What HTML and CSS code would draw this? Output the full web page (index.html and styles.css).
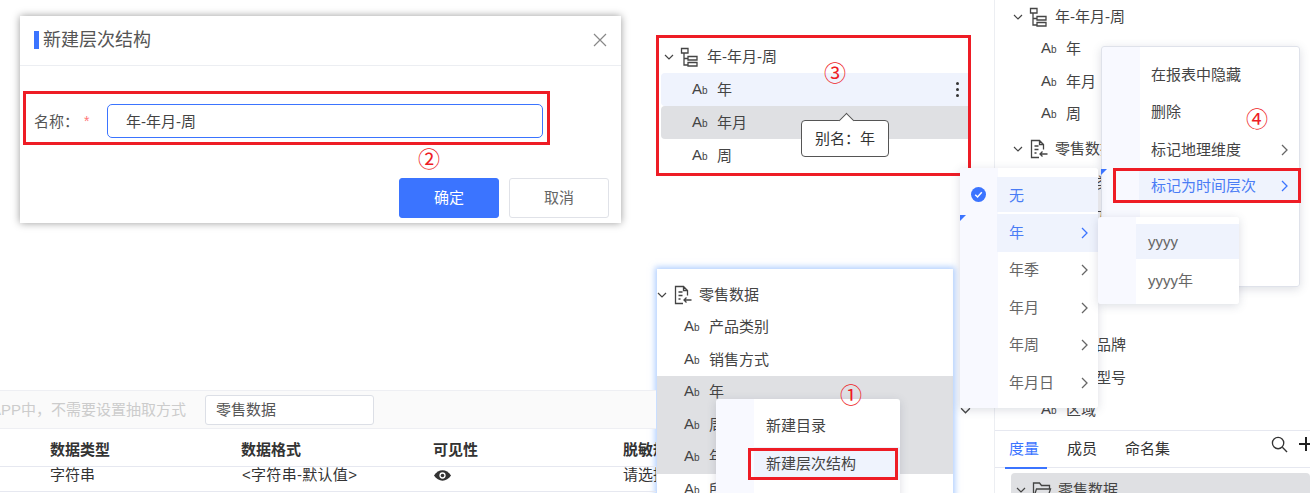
FILE: index.html
```html
<!DOCTYPE html>
<html lang="zh">
<head>
<meta charset="utf-8">
<title>新建层次结构</title>
<link rel="stylesheet" href="styles.css">
</head>
<body>
<svg class="defs" width="0" height="0" aria-hidden="true">
  <defs>
    <symbol id="hier" viewBox="0 0 20 20"><path d="M1.500 1.500h6.500v4.500h-6.500zM4 6v12h3.500M4 11.500h3.500M8 9.500h9v3.500h-9zM8 15.500h9v3.500h-9z" fill="none" stroke="currentColor" stroke-width="1.300"/></symbol>
    <symbol id="data" viewBox="0 0 20 20"><path d="M10 18.500H2.500V1.500h8l4 4v5M10.500 1.500v4h4M5.500 7h4M5.500 10.500h4M5.500 14h2M18.500 15h-7M13.500 12.500L11 15l2.500 2.500" fill="none" stroke="currentColor" stroke-width="1.300"/></symbol>
    <symbol id="down" viewBox="0 0 10 6"><path d="M1 1l4 4 4-4" fill="none" stroke="currentColor" stroke-width="1.200"/></symbol>
    <symbol id="right" viewBox="0 0 7 12"><path d="M1 1l5 5-5 5" fill="none" stroke="currentColor" stroke-width="1.300"/></symbol>
  </defs>
</svg>

<div class="dialog">
  <div class="dialog-head">
    <span class="mark"></span>
    <span class="dialog-title">新建层次结构</span>
    <svg class="close" viewBox="0 0 14 14"><path d="M1 1l12 12M13 1L1 13" fill="none" stroke="currentColor" stroke-width="1.200"/></svg>
  </div>
  <div class="form-row">
    <span class="label">名称：</span><span class="req">*</span>
    <div class="input">年-年月-周</div>
  </div>
  <div class="dialog-foot">
    <div class="btn primary">确定</div>
    <div class="btn">取消</div>
  </div>
</div>
<div class="redbox box2"></div>
<span class="num num2">②</span>

<div class="tree tree3">
  <div class="head"><svg class="chev"><use href="#down"/></svg><svg class="ico"><use href="#hier"/></svg><span>年-年月-周</span></div>
  <div class="leaf light"><span class="ab">A<small>b</small></span><span>年</span><span class="dots"><i></i><i></i><i></i></span></div>
  <div class="leaf grey"><span class="ab">A<small>b</small></span><span>年月</span></div>
  <div class="leaf"><span class="ab">A<small>b</small></span><span>周</span></div>
</div>
<div class="redbox box3"></div>
<span class="num num3">③</span>
<div class="tooltip">别名：年</div>

<div class="tree tree1">
  <div class="head"><svg class="chev"><use href="#down"/></svg><svg class="ico"><use href="#data"/></svg><span>零售数据</span></div>
  <div class="leaf"><span class="ab">A<small>b</small></span><span>产品类别</span></div>
  <div class="leaf"><span class="ab">A<small>b</small></span><span>销售方式</span></div>
  <div class="leaf grey"><span class="ab">A<small>b</small></span><span>年</span></div>
  <div class="leaf grey"><span class="ab">A<small>b</small></span><span>周</span></div>
  <div class="leaf grey"><span class="ab">A<small>b</small></span><span>年月</span></div>
  <div class="leaf"><span class="ab">A<small>b</small></span><span>所属</span></div>
</div>
<div class="menu menu1">
  <div class="item">新建目录</div>
  <div class="item hover">新建层次结构</div>
</div>
<div class="redbox box1"></div>
<span class="num num1">①</span>

<div class="sheet">
  <div class="band">
    <span class="hint">APP中，不需要设置抽取方式</span>
    <div class="src">零售数据</div>
  </div>
  <div class="grid grid-head"><span>数据类型</span><span>数据格式</span><span>可见性</span><span>脱敏规则</span></div>
  <div class="grid grid-row"><span>字符串</span><span class="fmt">&lt;字符串-默认值&gt;</span><span><svg class="eye" viewBox="0 0 20 12"><path d="M1 6c2.500-3.500 5.500-5.500 9-5.500s6.500 2 9 5.500c-2.500 3.500-5.500 5.500-9 5.500S3.500 9.500 1 6z" fill="currentColor"/><circle cx="10" cy="6" r="3.300" fill="#fff"/><circle cx="10" cy="6" r="1.900" fill="currentColor"/></svg></span><span>请选择</span></div>
</div>
<svg class="loose-chev"><use href="#down"/></svg>

<aside class="side">
  <div class="tree-side">
    <div class="head"><svg class="chev"><use href="#down"/></svg><svg class="ico"><use href="#hier"/></svg><span>年-年月-周</span></div>
    <div class="leaf"><span class="ab">A<small>b</small></span><span>年</span></div>
    <div class="leaf"><span class="ab">A<small>b</small></span><span>年月</span></div>
    <div class="leaf"><span class="ab">A<small>b</small></span><span>周</span></div>
    <div class="head"><svg class="chev"><use href="#down"/></svg><svg class="ico"><use href="#data"/></svg><span>零售数据</span></div>
    <div class="leaf"><span class="ab">A<small>b</small></span><span>产品类别</span></div>
    <div class="leaf"><span class="ab">A<small>b</small></span><span>销售方式</span></div>
    <div class="leaf"><span class="ab">A<small>b</small></span><span>年</span></div>
    <div class="leaf"><span class="ab">A<small>b</small></span><span>周</span></div>
    <div class="leaf"><span class="ab">A<small>b</small></span><span>年月</span></div>
    <div class="leaf"><span class="ab">A<small>b</small></span><span>产品品牌</span></div>
    <div class="leaf"><span class="ab">A<small>b</small></span><span>产品型号</span></div>
    <div class="leaf"><span class="ab">A<small>b</small></span><span>区域</span></div>
  </div>
  <div class="tabs">
    <span class="tab active">度量</span><span class="tab">成员</span><span class="tab">命名集</span>
    <svg class="search" viewBox="0 0 18 18"><circle cx="7.500" cy="7.500" r="6" fill="none" stroke="currentColor" stroke-width="1.400"/><path d="M12 12l5 5" stroke="currentColor" stroke-width="1.400"/></svg>
    <svg class="plus" viewBox="0 0 14 14"><path d="M7 0v14M0 7h14" stroke="currentColor" stroke-width="2"/></svg>
  </div>
  <div class="folder"><svg class="chev"><use href="#down"/></svg><svg class="ico" viewBox="0 0 20 20"><path d="M1.500 18V3h6l2 2.500h8V9M1.500 18l3-9h14l-3 9z" fill="none" stroke="currentColor" stroke-width="1.300"/></svg><span>零售数据</span></div>
</aside>

<div class="menu menu4">
  <div class="item">在报表中隐藏</div>
  <div class="item">删除</div>
  <div class="item">标记地理维度<svg class="arr"><use href="#right"/></svg></div>
  <div class="item hover blue">标记为时间层次<svg class="arr"><use href="#right"/></svg></div>
</div>
<div class="redbox box4"></div>
<span class="num num4">④</span>

<div class="menu menu-time">
  <div class="item hover blue"><svg class="check" viewBox="0 0 16 16"><circle cx="8" cy="8" r="8" fill="#3b74ff"/><path d="M4.500 8.200l2.500 2.400 4.500-5" fill="none" stroke="#fff" stroke-width="1.600"/></svg>无</div>
  <div class="item hover blue">年<svg class="arr"><use href="#right"/></svg></div>
  <div class="item">年季<svg class="arr"><use href="#right"/></svg></div>
  <div class="item">年月<svg class="arr"><use href="#right"/></svg></div>
  <div class="item">年周<svg class="arr"><use href="#right"/></svg></div>
  <div class="item">年月日<svg class="arr"><use href="#right"/></svg></div>
  <i class="corner corner-a"></i>
</div>
<i class="corner corner-b"></i>

<div class="menu menu-fmt">
  <div class="item hover">yyyy</div>
  <div class="item">yyyy年</div>
</div>
</body>
</html>
```

FILE: styles.css
```css
* { box-sizing: border-box; }
html, body { margin: 0; height: 100%; }
body {
  position: relative;
  width: 1310px;
  height: 493px;
  overflow: hidden;
  background: #fff;
  color: #333;
  font: 15px/20px "Liberation Sans", "Noto Sans CJK SC", sans-serif;
}
.defs { position: absolute; }

/* dialog */
.dialog {
  position: absolute;
  left: 20px;
  top: 16px;
  width: 601px;
  height: 207px;
  display: flex;
  flex-direction: column;
  background: #fff;
  box-shadow: 0 0 8px rgba(0, 0, 0, .4);
}
.dialog-head {
  flex: 0 0 50px;
  display: flex;
  align-items: center;
  gap: 4px;
  padding: 0 14px 1px;
  border-bottom: 1px solid #eceef2;
}
.mark { width: 5px; height: 18px; background: #3b74ff; }
.dialog-title { flex: 1; font-size: 18px; color: #555; margin-bottom: 1px; }
.close { width: 14px; height: 14px; color: #888; }
.form-row {
  display: flex;
  align-items: center;
  margin: 38px 78px 0 14px;
  height: 34px;
}
.label { color: #555; padding-top: 2px; }
.req { color: #f77; margin-left: 5px; width: 23px; font-size: 14px; }
.input {
  flex: 1;
  height: 34px;
  padding: 0 18px;
  line-height: 34px;
  border: 1px solid #3b74ff;
  border-radius: 5px;
  color: #444;
}
.dialog-foot {
  display: flex;
  justify-content: flex-end;
  gap: 10px;
  margin: 40px 12px 0 0;
}
.btn {
  width: 100px;
  height: 40px;
  line-height: 38px;
  text-align: center;
  border: 1px solid #e0e2e8;
  border-radius: 3px;
  color: #666;
}
.primary { background: #3b74ff; border-color: #3b74ff; color: #fff; }

/* annotations */
.redbox { position: absolute; border: 3px solid #ee1c25; }
.box1 { left: 748px; top: 448px; width: 150px; height: 32px; }
.box2 { left: 23px; top: 91px; width: 527px; height: 54px; }
.box3 { left: 656px; top: 35px; width: 315px; height: 141px; }
.box4 { left: 1113px; top: 168px; width: 188px; height: 35px; }
.num {
  position: absolute;
  width: 24px;
  text-align: center;
  font: 22px/22px "Noto Sans CJK SC", sans-serif;
  color: #ee1c25;
}
.num1 { left: 839px; top: 382px; }
.num2 { left: 417px; top: 146px; }
.num3 { left: 823px; top: 60px; }
.num4 { left: 1245px; top: 106px; }

/* trees */
.tree { position: absolute; background: #fff; }
.head, .leaf, .folder { display: flex; align-items: center; white-space: nowrap; }
.chev { width: 10px; height: 6px; color: #444; flex: none; }
.ico { width: 20px; height: 20px; color: #444; flex: none; }
.ab { width: 25px; flex: none; color: #444; font-size: 15px; }
.ab small { font-size: 10px; }
.leaf { color: #444; }
.head { color: #444; }
.leaf.grey { background: #dfe0e3; }
.leaf.light { background: #eff3fd; }

.tree3 { left: 661px; top: 41px; width: 307px; }
.tree3 .head { height: 32px; padding-left: 3px; gap: 7px; }
.tree3 .head .ico { margin-left: -1px; }
.tree3 .leaf { height: 33px; padding-left: 31px; border-radius: 4px 0 0 4px; }
.dots { display: flex; flex-direction: column; gap: 3px; margin-left: auto; margin-right: 9px; }
.dots i { width: 3px; height: 3px; background: #333; border-radius: 50%; }
.tooltip {
  position: absolute;
  left: 801px;
  top: 120px;
  width: 88px;
  height: 37px;
  line-height: 35px;
  text-align: center;
  background: #fff;
  border: 1px solid #555;
  border-radius: 4px;
}
.tooltip::before {
  content: "";
  position: absolute;
  left: 39px;
  top: -6px;
  width: 10px;
  height: 10px;
  background: #fff;
  border: solid #555;
  border-width: 1px 0 0 1px;
  transform: rotate(45deg);
}

.tree1 {
  left: 657px;
  top: 269px;
  width: 296px;
  height: 240px;
  padding-top: 10px;
  box-shadow: 0 0 6px 2px rgba(110, 165, 255, .55);
}
.tree1 .head { height: 32px; gap: 6px; }
.tree1 .leaf { height: 32.500px; padding-left: 27px; }

/* menus */
.menu {
  position: absolute;
  display: flex;
  flex-direction: column;
  color: #444;
  background: linear-gradient(90deg, #f8f9ff 38px, #fff 38px);
  border-radius: 3px;
  box-shadow: 0 2px 10px rgba(60, 70, 100, .18);
}
.item {
  position: relative;
  display: flex;
  align-items: center;
  justify-content: space-between;
  margin-left: 38px;
  padding: 0 12px;
  white-space: nowrap;
}
.hover { background: #eff3fd; }
.blue { color: #4a7cf5; }
.arr { width: 7px; height: 12px; flex: none; color: #666; }
.blue .arr { color: #3b74ff; }

.menu1 { left: 716px; top: 399px; width: 184px; height: 110px; padding-top: 9px; }
.menu1 .item { height: 36px; }
.menu1 .item + .item { margin-top: 3px; height: 33px; }

.menu4 { left: 1101px; top: 46px; width: 199px; height: 241px; padding-top: 9px; border: 1px solid #dfe2ea; }
.menu4 .item { height: 37.500px; margin-left: 37px; padding-right: 11px; }
.menu4 .item:last-child { height: 34px; }

.menu-time { left: 960px; top: 168px; width: 138px; height: 240px; padding-top: 9px; color: #666; }
.menu-time .item { height: 37.500px; margin-left: 37px; padding-right: 10px; }
.menu-time .item:first-child { height: 35px; margin-bottom: 2px; padding-top: 2px; }
.check { position: absolute; left: -26px; top: 10px; width: 15px; height: 15px; }
.corner {
  position: absolute;
  width: 0;
  height: 0;
  border-style: solid;
  border-width: 6px 6px 0 0;
  border-color: #3b74ff transparent transparent transparent;
}
.corner-a { left: 0; top: 47px; }
.corner-b { left: 1101px; top: 169px; }

.menu-fmt { left: 1098px; top: 217px; width: 141px; height: 87px; padding-top: 7px; color: #666; font-size: 15px; }
.menu-fmt .item { height: 35px; }
.menu-fmt .item + .item { margin-top: 2px; height: 40px; }

/* bottom sheet */
.sheet { position: absolute; left: 0; top: 390px; width: 656px; overflow: hidden; }
.band {
  height: 39px;
  display: flex;
  align-items: center;
  gap: 19px;
  background: #fafafa;
  border-top: 1px solid #eeeff3;
  border-bottom: 1px solid #eeeff3;
}
.hint { margin-left: -9px; width: 195px; white-space: nowrap; color: #ccc; }
.src {
  width: 169px;
  height: 30px;
  line-height: 28px;
  padding-left: 10px;
  background: #fff;
  border: 1px solid #dcdfe6;
  border-radius: 3px;
  color: #555;
}
.grid {
  display: grid;
  grid-template-columns: 191px 192px 190px 1fr;
  padding-left: 50px;
  overflow: hidden;
  white-space: nowrap;
}
.grid-head { height: 38px; align-items: center; font-weight: bold; border-bottom: 1px solid #e6e8f0; padding-top: 4px; }
.grid-row { height: 25px; line-height: 16px; border-bottom: 1px solid #e6e8f0; }
.fmt { letter-spacing: .3px; padding-left: 1px; }
.eye { width: 19px; height: 13px; margin-top: 2px; color: #333; display: block; }
.loose-chev { position: absolute; left: 960px; top: 407px; width: 11px; height: 7px; color: #444; }

/* right panel */
.side {
  position: absolute;
  left: 994px;
  top: 0;
  width: 316px;
  height: 493px;
  border-left: 1px solid #eceef2;
  display: flex;
  flex-direction: column;
}
.tree-side { flex: none; height: 430px; overflow: hidden; }
.tree-side .head { height: 33px; padding-left: 18px; gap: 6px; }
.tree-side .leaf { height: 32.400px; padding-left: 46px; }
.tree-side .head:nth-child(5) { height: 37px; }
.tabs {
  position: relative;
  flex: none;
  display: flex;
  gap: 28px;
  height: 38px;
  padding: 8px 0 0 10px;
  border-top: 1px solid #e6e8f0;
  border-bottom: 1px solid #e6e8f0;
}
.tab { height: 28px; }
.tab.active { color: #3b74ff; box-shadow: 0 2px 0 #3b74ff; padding: 0 8px 0 4px; margin-right: -8px; }
.search { position: absolute; left: 276px; top: 5px; width: 17px; height: 17px; color: #333; }
.plus { position: absolute; left: 304px; top: 6px; width: 14px; height: 14px; color: #222; }
.folder {
  flex: none;
  height: 34px;
  margin: 5px 0 0 16px;
  padding-left: 5px;
  gap: 6px;
  background: #dfe0e3;
  border-radius: 4px;
  color: #444;
}
```
